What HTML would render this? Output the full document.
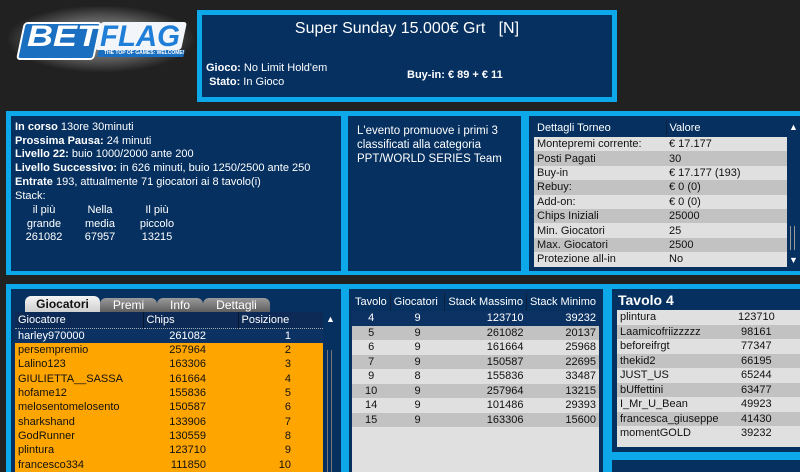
<!DOCTYPE html>
<html><head><meta charset="utf-8"><style>
*{margin:0;padding:0;box-sizing:border-box}
body{width:800px;height:472px;background:#212121;font-family:"Liberation Sans",Arial,sans-serif;position:relative;overflow:hidden;color:#fff;font-size:12px}
.abs{position:absolute}
.cy{background:#0ca8ea}
.db{background:#053060}
table{border-collapse:collapse}
.t td{padding:0 3px;white-space:nowrap;overflow:hidden}
.r{text-align:right;padding-right:32px!important}
</style></head><body>
<!-- logo -->
<div class="abs" style="left:8px;top:6px;width:186px;height:66px;border-radius:26px;background:radial-gradient(ellipse at center,#9a9a9a 0%,#5a5a5a 45%,#212121 72%)"></div>
<div class="abs" style="left:20px;top:22px;width:78px;height:38px;background:#1a6fc0;transform:skewX(-12deg);border-radius:4px;border:2px solid #fff"></div>
<div class="abs" style="left:98px;top:22px;width:86px;height:28px;background:#f2f6fb;transform:skewX(-12deg);border-radius:3px"></div>
<div class="abs" style="left:27px;top:20px;font:italic bold 30px 'Liberation Sans',sans-serif;color:#fff;transform:scaleX(1.2);transform-origin:left">BET</div>
<div class="abs" style="left:100px;top:20px;font:italic bold 30px 'Liberation Sans',sans-serif;color:#1f7fd8;transform:scaleX(0.98);transform-origin:left">FLAG</div>
<div class="abs" style="left:98px;top:50px;width:86px;height:7px;background:#1a6fc0;transform:skewX(-12deg)"></div>
<div class="abs" style="left:104px;top:50px;font:bold 5px 'Liberation Sans',sans-serif;color:#fff">THE TOP OF GAMES: WELCOME!</div>

<!-- header -->
<div class="abs cy" style="left:197px;top:10px;width:420px;height:92px"></div>
<div class="abs db" style="left:202px;top:15px;width:410px;height:82px"></div>
<div class="abs" style="left:202px;top:20px;width:410px;text-align:center;font-size:16px">Super Sunday 15.000€ Grt&nbsp;&nbsp;&nbsp;[N]</div>
<div class="abs" style="left:206px;top:61px;font-size:11px;line-height:14px"><b>Gioco:</b> No Limit Hold'em<br>&nbsp;<b>Stato:</b> In Gioco</div>
<div class="abs" style="left:407px;top:69px;font-size:11px;font-weight:bold">Buy-in: € 89 + € 11</div>

<!-- row 2 -->
<div class="abs cy" style="left:6px;top:111px;width:794px;height:164px"></div>
<div class="abs db" style="left:11px;top:116px;width:330px;height:155px"></div>
<div class="abs db" style="left:348px;top:116px;width:173px;height:155px"></div>
<div class="abs db" style="left:529px;top:116px;width:271px;height:155px"></div>
<div class="abs" style="left:15px;top:121px;line-height:13.7px;font-size:11px">
<b>In corso</b> 13ore 30minuti<br><b>Prossima Pausa:</b> 24 minuti<br><b>Livello 22:</b> buio 1000/2000 ante 200<br><b>Livello Successivo:</b> in 626 minuti, buio 1250/2500 ante 250<br><b>Entrate</b> 193, attualmente 71 giocatori ai 8 tavolo(i)<br>Stack:</div>
<div class="abs" style="left:20px;top:204px;width:48px;text-align:center;line-height:13.7px;font-size:11px">il più<br>grande<br>261082</div>
<div class="abs" style="left:76px;top:204px;width:48px;text-align:center;line-height:13.7px;font-size:11px">Nella<br>media<br>67957</div>
<div class="abs" style="left:133px;top:204px;width:48px;text-align:center;line-height:13.7px;font-size:11px">Il più<br>piccolo<br>13215</div>
<div class="abs" style="left:357px;top:124px;line-height:14px;font-size:11.5px">L'evento promuove i primi 3<br>classificati alla categoria<br>PPT/WORLD SERIES Team</div>
<div class="abs" style="left:534px;top:119px;width:253px;height:148px;background:#e0e0e0;overflow:hidden;color:#111;font-size:11px">
<table class="t" style="width:253px">
<tr style="background:#053060;color:#fff;height:18px"><td style="width:132px;border-right:1px solid #0d1f3a">Dettagli Torneo</td><td>Valore</td></tr>
<tr style="height:14.4px"><td>Montepremi corrente:</td><td>€ 17.177</td></tr>
<tr style="height:14.4px;background:#c2c2c2"><td>Posti Pagati</td><td>30</td></tr>
<tr style="height:14.4px"><td>Buy-in</td><td>€ 17.177 (193)</td></tr>
<tr style="height:14.4px;background:#c2c2c2"><td>Rebuy:</td><td>€ 0 (0)</td></tr>
<tr style="height:14.4px"><td>Add-on:</td><td>€ 0 (0)</td></tr>
<tr style="height:14.4px;background:#c2c2c2"><td>Chips Iniziali</td><td>25000</td></tr>
<tr style="height:14.4px"><td>Min. Giocatori</td><td>25</td></tr>
<tr style="height:14.4px;background:#c2c2c2"><td>Max. Giocatori</td><td>2500</td></tr>
<tr style="height:14.4px"><td>Protezione all-in</td><td>No</td></tr>
</table></div>
<div class="abs" style="left:789px;top:122px;font-size:9px">▲</div>
<div class="abs" style="left:790px;top:226px;width:5px;height:24px;border-left:1px solid #999;border-right:1px solid #999"></div>
<div class="abs" style="left:789px;top:255px;font-size:9px">▼</div>

<!-- row 3 -->
<div class="abs cy" style="left:6px;top:284px;width:794px;height:188px"></div>
<div class="abs db" style="left:11px;top:289px;width:330px;height:183px"></div>
<div class="abs db" style="left:349px;top:289px;width:254px;height:183px"></div>
<div class="abs db" style="left:612px;top:289px;width:188px;height:163px"></div>
<div class="abs db" style="left:612px;top:460px;width:188px;height:12px"></div>

<!-- tabs -->
<div class="abs" style="left:25px;top:296px;width:75px;height:16px;background:linear-gradient(#f4f4f4,#cfcfcf);border-radius:6px 6px 0 0;color:#111;font-size:12px;font-weight:bold;text-align:center;line-height:16px">Giocatori</div>
<div class="abs" style="left:100px;top:298px;width:57px;height:14px;background:linear-gradient(#9a9a9a,#5e5e5e);border-radius:6px 6px 0 0;text-align:center;font-size:12px;line-height:14px">Premi</div>
<div class="abs" style="left:157px;top:298px;width:46px;height:14px;background:linear-gradient(#9a9a9a,#5e5e5e);border-radius:6px 6px 0 0;text-align:center;font-size:12px;line-height:14px">Info</div>
<div class="abs" style="left:203px;top:298px;width:67px;height:14px;background:linear-gradient(#9a9a9a,#5e5e5e);border-radius:6px 6px 0 0;text-align:center;font-size:12px;line-height:14px">Dettagli</div>
<div class="abs" style="left:15px;top:312px;width:308px;height:160px;overflow:hidden;font-size:11px">
<table class="t" style="width:308px">
<tr style="height:16px;background:#0c2a55"><td style="width:128px;border-right:1px solid #06162e">Giocatore</td><td style="width:95px;border-right:1px solid #06162e">Chips</td><td>Posizione</td></tr>
<tr style="height:15px;background:#0c3264;border-top:1px dotted #aaa"><td>harley970000</td><td class="r">261082</td><td class="r">1</td></tr>
</table>
<table class="t" style="width:308px;background:#ffa500;color:#111">
<tr style="height:14.3px"><td style="width:128px">persempremio</td><td style="width:95px" class="r">257964</td><td class="r">2</td></tr>
<tr style="height:14.3px"><td>Lalino123</td><td class="r">163306</td><td class="r">3</td></tr>
<tr style="height:14.3px"><td>GIULIETTA__SASSA</td><td class="r">161664</td><td class="r">4</td></tr>
<tr style="height:14.3px"><td>hofame12</td><td class="r">155836</td><td class="r">5</td></tr>
<tr style="height:14.3px"><td>melosentomelosento</td><td class="r">150587</td><td class="r">6</td></tr>
<tr style="height:14.3px"><td>sharkshand</td><td class="r">133906</td><td class="r">7</td></tr>
<tr style="height:14.3px"><td>GodRunner</td><td class="r">130559</td><td class="r">8</td></tr>
<tr style="height:14.3px"><td>plintura</td><td class="r">123710</td><td class="r">9</td></tr>
<tr style="height:14.3px"><td>francesco334</td><td class="r">111850</td><td class="r">10</td></tr>
</table></div>
<div class="abs" style="left:326px;top:314px;font-size:9px">▲</div>
<div class="abs" style="left:327px;top:350px;width:5px;height:122px;border-left:1px solid #777;border-right:1px solid #777"></div>

<!-- middle table -->
<div class="abs" style="left:352px;top:293px;width:247px;height:179px;background:#e0e0e0;overflow:hidden;font-size:11px;color:#111">
<table class="t" style="width:247px">
<tr style="height:18px;background:#053060;color:#fff"><td style="width:35px;border-right:1px solid #0d1f3a">Tavolo</td><td style="width:60px;border-right:1px solid #0d1f3a">Giocatori</td><td style="width:74px;border-right:1px solid #0d1f3a">Stack Massimo</td><td>Stack Minimo</td></tr>
<tr style="height:14.5px;background:#0c3264;color:#fff"><td style="text-align:center">4</td><td style="text-align:center">9</td><td style="text-align:right">123710</td><td style="text-align:right">39232</td></tr>
<tr style="height:14.5px;background:#c2c2c2"><td style="text-align:center">5</td><td style="text-align:center">9</td><td style="text-align:right">261082</td><td style="text-align:right">20137</td></tr>
<tr style="height:14.5px"><td style="text-align:center">6</td><td style="text-align:center">9</td><td style="text-align:right">161664</td><td style="text-align:right">25968</td></tr>
<tr style="height:14.5px;background:#c2c2c2"><td style="text-align:center">7</td><td style="text-align:center">9</td><td style="text-align:right">150587</td><td style="text-align:right">22695</td></tr>
<tr style="height:14.5px"><td style="text-align:center">9</td><td style="text-align:center">8</td><td style="text-align:right">155836</td><td style="text-align:right">33487</td></tr>
<tr style="height:14.5px;background:#c2c2c2"><td style="text-align:center">10</td><td style="text-align:center">9</td><td style="text-align:right">257964</td><td style="text-align:right">13215</td></tr>
<tr style="height:14.5px"><td style="text-align:center">14</td><td style="text-align:center">9</td><td style="text-align:right">101486</td><td style="text-align:right">29393</td></tr>
<tr style="height:14.5px;background:#c2c2c2"><td style="text-align:center">15</td><td style="text-align:center">9</td><td style="text-align:right">163306</td><td style="text-align:right">15600</td></tr>
</table></div>

<!-- tavolo 4 -->
<div class="abs" style="left:618px;top:292px;font-size:14px;font-weight:bold">Tavolo 4</div>
<div class="abs" style="left:617px;top:310px;width:183px;height:137px;background:#e0e0e0;overflow:hidden;font-size:11px;color:#111">
<table class="t" style="width:183px">
<tr style="height:14.5px"><td style="width:118px">plintura</td><td>123710</td></tr>
<tr style="height:14.5px;background:#c2c2c2"><td>Laamicofriizzzzz</td><td>&nbsp;98161</td></tr>
<tr style="height:14.5px"><td>beforeifrgt</td><td>&nbsp;77347</td></tr>
<tr style="height:14.5px;background:#c2c2c2"><td>thekid2</td><td>&nbsp;66195</td></tr>
<tr style="height:14.5px"><td>JUST_US</td><td>&nbsp;65244</td></tr>
<tr style="height:14.5px;background:#c2c2c2"><td>bUffettini</td><td>&nbsp;63477</td></tr>
<tr style="height:14.5px"><td>I_Mr_U_Bean</td><td>&nbsp;49923</td></tr>
<tr style="height:14.5px;background:#c2c2c2"><td>francesca_giuseppe</td><td>&nbsp;41430</td></tr>
<tr style="height:14.5px"><td>momentGOLD</td><td>&nbsp;39232</td></tr>
</table></div>
</body></html>
